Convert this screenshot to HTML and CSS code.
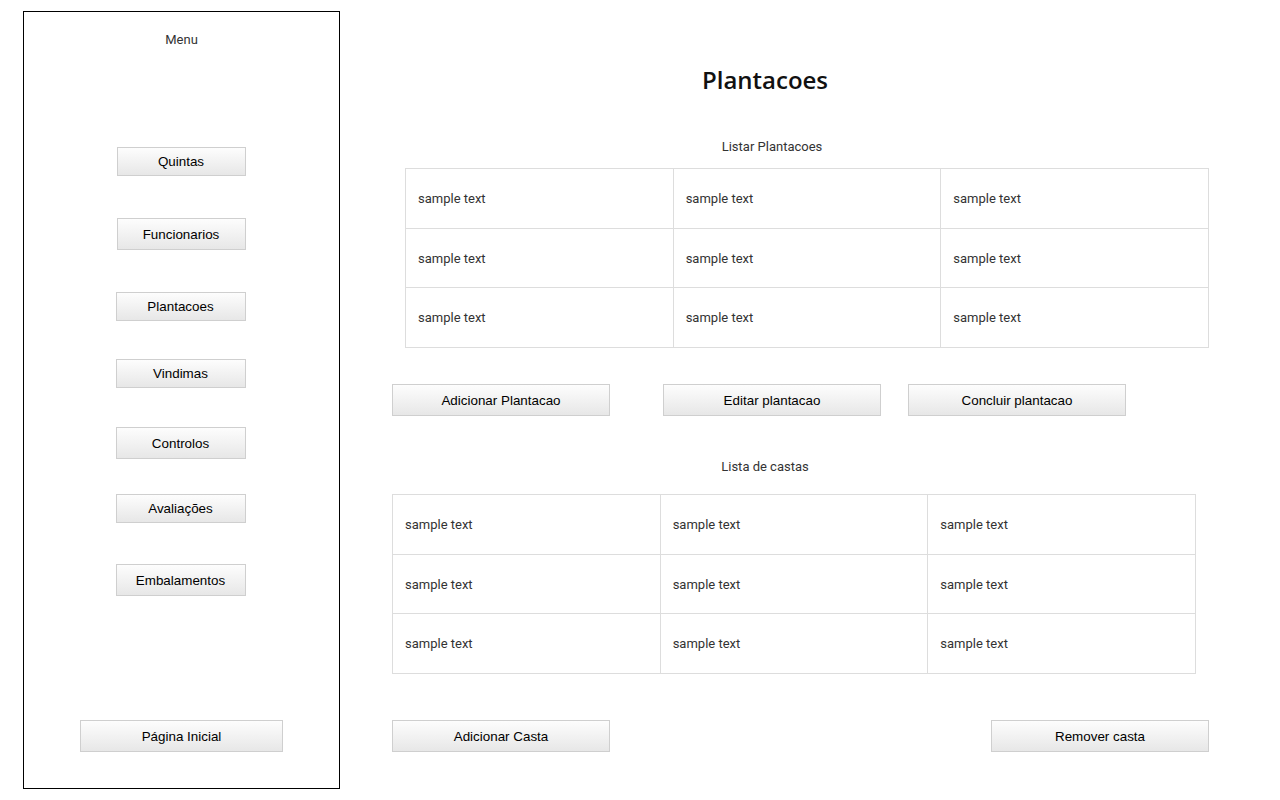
FILE: index.html
```html
<!DOCTYPE html>
<html lang="pt">
<head>
<meta charset="utf-8">
<title>Plantacoes</title>
<link rel="stylesheet" href="styles.css">
</head>
<body>
<div class="page">
  <aside class="sidebar">
    <div class="menu-title">Menu</div>
    <nav class="nav">
      <button class="btn nav-btn n1">Quintas</button>
      <button class="btn nav-btn n2">Funcionarios</button>
      <button class="btn nav-btn n3">Plantacoes</button>
      <button class="btn nav-btn n4">Vindimas</button>
      <button class="btn nav-btn n5">Controlos</button>
      <button class="btn nav-btn n6">Avaliações</button>
      <button class="btn nav-btn n7">Embalamentos</button>
    </nav>
    <button class="btn home-btn">Página Inicial</button>
  </aside>
  <main class="main">
    <h1 class="title">Plantacoes</h1>
    <div class="section-label label-1">Listar Plantacoes</div>
    <table class="grid grid-1">
      <tr><td>sample text</td><td>sample text</td><td>sample text</td></tr>
      <tr><td>sample text</td><td>sample text</td><td>sample text</td></tr>
      <tr><td>sample text</td><td>sample text</td><td>sample text</td></tr>
    </table>
    <div class="actions">
      <button class="btn act-btn">Adicionar Plantacao</button>
      <button class="btn act-btn gap-wide">Editar plantacao</button>
      <button class="btn act-btn gap-narrow">Concluir plantacao</button>
    </div>
    <div class="section-label label-2">Lista de castas</div>
    <table class="grid grid-2">
      <tr><td>sample text</td><td>sample text</td><td>sample text</td></tr>
      <tr><td>sample text</td><td>sample text</td><td>sample text</td></tr>
      <tr><td>sample text</td><td>sample text</td><td>sample text</td></tr>
    </table>
    <div class="bottom-actions">
      <button class="btn act-btn">Adicionar Casta</button>
      <button class="btn act-btn">Remover casta</button>
    </div>
  </main>
</div>
</body>
</html>
```

FILE: styles.css
```css
* { box-sizing: border-box; }

html, body {
  margin: 0;
  padding: 0;
  background: #ffffff;
}

body {
  font-family: Roboto, "Liberation Sans", Arial, sans-serif;
  color: #333333;
}

.page {
  display: flex;
  align-items: flex-start;
  padding: 11px 0 0 23px;
}

.sidebar {
  width: 317px;
  height: 778px;
  border: 1px solid #000000;
  display: flex;
  flex-direction: column;
  align-items: center;
}

.menu-title {
  margin-top: 20px;
  font-size: 13px;
  line-height: 16px;
  color: #333333;
}

.nav {
  display: flex;
  flex-direction: column;
  align-items: center;
}

.btn {
  font-family: "Liberation Sans", Arial, sans-serif;
  font-size: 13.4px;
  color: #000000;
  background: linear-gradient(to bottom, #fdfdfd 0%, #e7e7e7 100%);
  border: 1px solid #cfcfcf;
  border-radius: 0;
  padding: 0;
  margin: 0;
  display: flex;
  align-items: center;
  justify-content: center;
}

.nav-btn {
  width: 130px;
  height: 29px;
  margin-right: 2px;
}

.n1 { margin-top: 99px; width: 129px; margin-right: 1px; }
.n2 { margin-top: 42px; height: 32px; width: 129px; margin-right: 1px; }
.n3 { margin-top: 42px; }
.n4 { margin-top: 38px; }
.n5 { margin-top: 39px; height: 32px; }
.n6 { margin-top: 35px; }
.n7 { margin-top: 41px; height: 32px; }

.home-btn {
  width: 203px;
  height: 32px;
  margin-top: auto;
  margin-bottom: 36px;
}

.main {
  margin-left: 52px;
  width: 817px;
  display: flex;
  flex-direction: column;
}

.title {
  width: 746px;
  margin: 55px 0 0 0;
  text-align: center;
  font-family: "Open Sans", sans-serif;
  font-weight: 600;
  font-size: 24px;
  line-height: 28px;
  color: #111111;
}

.section-label {
  font-size: 13px;
  line-height: 16px;
  text-align: center;
  color: #333333;
}

.label-1 {
  width: 760px;
  margin-top: 45px;
}

.label-2 {
  width: 746px;
  margin-top: 43px;
}

.grid {
  border-collapse: collapse;
  width: 804px;
  table-layout: fixed;
}

.grid td {
  border: 1px solid #dddddd;
  height: 60px;
  padding: 0 0 0 12px;
  font-size: 13px;
  color: #333333;
  vertical-align: middle;
}

.grid tr:nth-child(2) td {
  height: 59px;
}

.grid-1 {
  margin: 13px 0 0 13px;
}

.grid-2 {
  margin: 19px 0 0 0;
}

.actions {
  display: flex;
  margin-top: 36px;
}

.act-btn {
  width: 218px;
  height: 32px;
}

.gap-wide { margin-left: 53px; }
.gap-narrow { margin-left: 27px; }

.bottom-actions {
  display: flex;
  justify-content: space-between;
  margin-top: 46px;
}
```
